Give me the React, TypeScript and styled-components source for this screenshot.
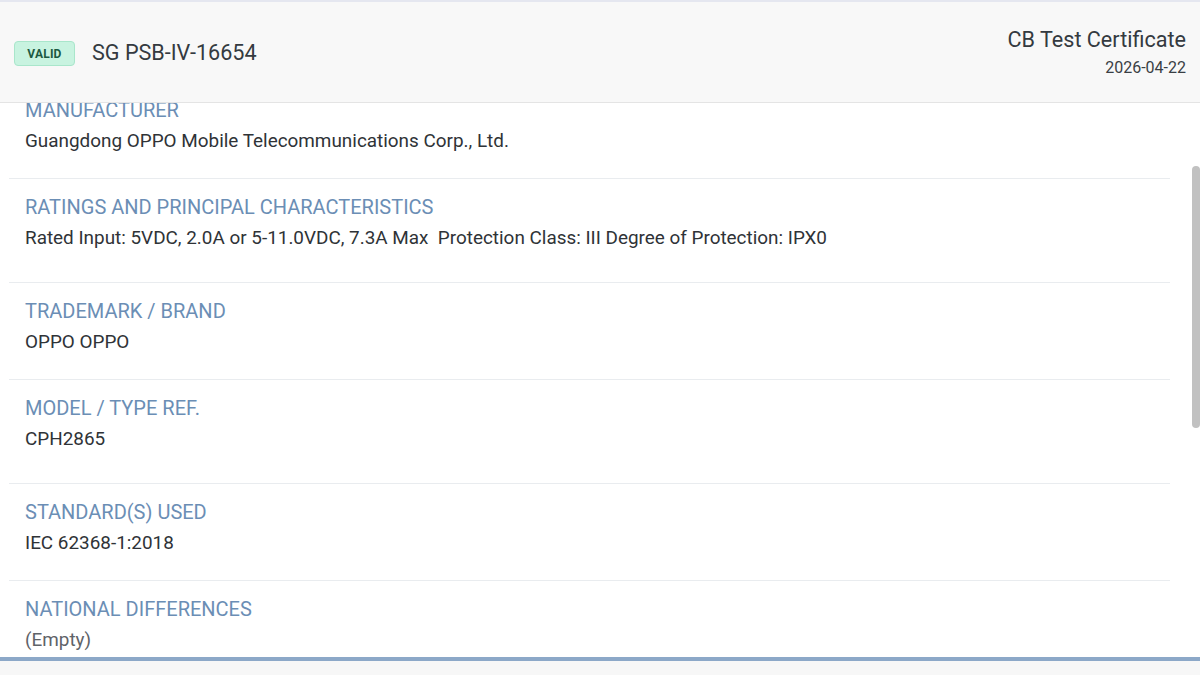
import { useLayoutEffect, useRef, useState } from 'react';
import styled, { createGlobalStyle } from 'styled-components';

type Field = {
  label: string;
  value: string;
  spacious?: boolean;
  empty?: boolean;
};

const fields: Field[] = [
  {
    label: 'Applicant',
    value: 'Guangdong OPPO Mobile Telecommunications Corp., Ltd.',
    spacious: true,
  },
  {
    label: 'Manufacturer',
    value: 'Guangdong OPPO Mobile Telecommunications Corp., Ltd.',
  },
  {
    label: 'Ratings and principal characteristics',
    value:
      'Rated Input: 5VDC, 2.0A or 5-11.0VDC, 7.3A Max  Protection Class: III Degree of Protection: IPX0',
    spacious: true,
  },
  { label: 'Trademark / Brand', value: 'OPPO OPPO' },
  { label: 'Model / Type Ref.', value: 'CPH2865', spacious: true },
  { label: 'Standard(s) used', value: 'IEC 62368-1:2018' },
  {
    label: 'National differences',
    value: '(Empty)',
    spacious: true,
    empty: true,
  },
  { label: 'Additional information', value: '(Empty)', empty: true },
  { label: 'Test report ref. no.', value: '(Empty)', spacious: true, empty: true },
  { label: 'Issuing CB', value: 'PSB Singapore' },
  { label: 'Date of issue', value: '2026-04-22', spacious: true },
];

const CertificateDetail = () => {
  const listRef = useRef<HTMLDivElement>(null);
  const anchorRef = useRef<HTMLDivElement>(null);
  const [thumb, setThumb] = useState({ top: 0, height: 0 });

  const updateThumb = () => {
    const el = listRef.current;
    if (!el) return;
    const { scrollTop, scrollHeight, clientHeight } = el;
    if (scrollHeight <= clientHeight) {
      setThumb({ top: 0, height: 0 });
      return;
    }
    setThumb({
      top: (scrollTop / scrollHeight) * clientHeight,
      height: (clientHeight * clientHeight) / scrollHeight,
    });
  };

  // keep the manufacturer row just under the header edge
  useLayoutEffect(() => {
    if (listRef.current && anchorRef.current) {
      listRef.current.scrollTop = anchorRef.current.offsetTop + 21;
    }
    updateThumb();
  }, []);

  return (
    <Page>
      <GlobalStyle />
      <Header>
        <TitleGroup>
          <Badge>VALID</Badge>
          <CertNumber>SG PSB-IV-16654</CertNumber>
        </TitleGroup>
        <Meta>
          <CertType>CB Test Certificate</CertType>
          <IssueDate>2026-04-22</IssueDate>
        </Meta>
      </Header>
      <ScrollRegion>
        <ScrollArea ref={listRef} onScroll={updateThumb}>
          <FieldList>
            {fields.map((field, i) => (
              <FieldRow
                key={field.label}
                ref={i === 1 ? anchorRef : undefined}
                $spacious={field.spacious}
              >
                <Label>{field.label}</Label>
                <Value $empty={field.empty}>{field.value}</Value>
              </FieldRow>
            ))}
          </FieldList>
        </ScrollArea>
        {thumb.height > 0 && (
          <ScrollThumb style={{ top: thumb.top, height: thumb.height }} />
        )}
      </ScrollRegion>
      <Footer />
    </Page>
  );
};

const GlobalStyle = createGlobalStyle`
  * {
    box-sizing: border-box;
  }

  body {
    margin: 0;
    background: #ffffff;
    font-family: Roboto, 'Liberation Sans', sans-serif;
  }
`;

const Page = styled.div`
  width: 1200px;
  height: 675px;
  display: flex;
  flex-direction: column;
  overflow: hidden;
  background: #ffffff;
`;

const Header = styled.header`
  flex: none;
  height: 103px;
  padding: 0 14px;
  border-top: 2px solid #e5e7f0;
  border-bottom: 1px solid #e4e4e4;
  background: #f8f8f8;

  display: flex;
  align-items: center;
  justify-content: space-between;
`;

const TitleGroup = styled.div`
  display: flex;
  align-items: center;
  gap: 17px;
  margin-top: 1px;
`;

const Badge = styled.span`
  width: 61px;
  height: 25px;
  border: 1px solid #a9e6cb;
  border-radius: 4px;
  background: #c8f3e0;

  display: flex;
  align-items: center;
  justify-content: center;

  color: #1c5a42;
  font-size: 12px;
  font-weight: 700;
  letter-spacing: 0.2px;
  margin-top: 2px;
`;

const CertNumber = styled.h1`
  margin: 0;
  color: #343a40;
  font-size: 21.6px;
  font-weight: 400;
  line-height: 26px;
`;

const Meta = styled.div`
  display: flex;
  flex-direction: column;
  align-items: flex-end;
  gap: 5px;
`;

const CertType = styled.p`
  margin: 0;
  color: #343a40;
  font-size: 21.6px;
  line-height: 26px;
`;

const IssueDate = styled.p`
  margin: 0;
  color: #3a3f44;
  font-size: 16px;
  line-height: 20px;
`;

const ScrollRegion = styled.div`
  position: relative;
  flex: 1;
  min-height: 0;
`;

const ScrollArea = styled.div`
  position: relative;
  height: 100%;
  overflow-y: auto;
  scrollbar-width: none;

  &::-webkit-scrollbar {
    display: none;
  }
`;

const ScrollThumb = styled.div`
  position: absolute;
  right: 0;
  width: 8px;
  border-radius: 4px;
  background: #c1c1c1;
`;

const FieldList = styled.div`
  padding: 7px 30px 54px 9px;
  display: flex;
  flex-direction: column;
`;

const FieldRow = styled.div<{ $spacious?: boolean }>`
  padding: 16px 16px ${({ $spacious }) => ($spacious ? '32px' : '25px')};
  border-bottom: 1px solid #e9ecef;

  &:last-child {
    border-bottom: none;
  }
`;

const Label = styled.div`
  margin-bottom: 7px;
  color: #6b8eb5;
  font-size: 20px;
  line-height: 24px;
  text-transform: uppercase;
`;

const Value = styled.div<{ $empty?: boolean }>`
  color: ${({ $empty }) => ($empty ? '#5f6368' : '#2f3337')};
  font-size: 18.9px;
  line-height: 24px;
  white-space: pre-wrap;
`;

const Footer = styled.footer`
  flex: none;
  height: 18px;
  border-top: 4px solid #8ca8c8;
  background: #f7f7f7;
`;

export default CertificateDetail;
